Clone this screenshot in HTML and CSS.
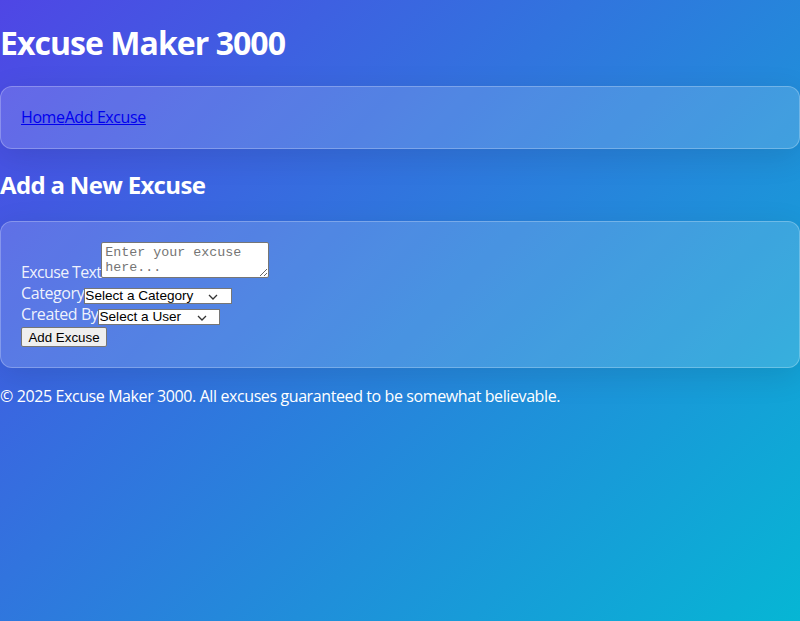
FILE: index.html
```html
<!DOCTYPE html>
<html lang="en">
<head>
<meta charset="utf-8">
<title>Excuse Maker 3000</title>
<link rel="stylesheet" href="styles.css">
</head>
<body>
<header>
  <h1 class="title">Excuse Maker 3000</h1>
  <nav class="card nav">
    <a href="#">Home</a><a href="#">Add Excuse</a>
  </nav>
</header>
<main>
  <h2 class="subtitle">Add a New Excuse</h2>
  <form class="card form">
    <div class="row">
      <label for="text" class="lbl-text">Excuse Text</label><textarea id="text" placeholder="Enter your excuse here..."></textarea>
    </div>
    <div class="row">
      <label for="cat">Category</label><select id="cat" class="sel sel-cat"><option>Select a Category</option></select>
    </div>
    <div class="row">
      <label for="user">Created By</label><select id="user" class="sel sel-user"><option>Select a User</option></select>
    </div>
    <button type="button" class="btn">Add Excuse</button>
  </form>
</main>
<footer class="footer">
  <p>&copy; 2025 Excuse Maker 3000. All excuses guaranteed to be somewhat believable.</p>
</footer>
</body>
</html>
```
FILE: styles.css
```css
html {
  min-height: 100%;
  background: linear-gradient(135deg, #4f46e5 0%, #06b6d4 100%);
}
body {
  margin: 0;
  min-height: 621px;
  font-family: "Open Sans", "Noto Sans", sans-serif;
  font-size: 16px;
  line-height: 1.33;
  letter-spacing: -0.025em;
  color: #fff;
}
.title {
  font-size: 32px;
  letter-spacing: -0.03em;
  margin: 22px 0 21px;
}
.subtitle {
  font-size: 24px;
  letter-spacing: -0.028em;
  margin: 20px 0;
}
.card {
  background: rgba(255, 255, 255, 0.15);
  border: 1px solid rgba(255, 255, 255, 0.25);
  border-radius: 12px;
  padding: 20px;
  box-shadow: 0 8px 32px rgba(0, 0, 0, 0.1);
  margin-bottom: 18px;
}
.nav {
  margin-bottom: 20px;
}
.nav a {
  color: #0000ee;
}
.row label {
  color: rgba(255, 255, 255, 0.92);
}
.row .lbl-text {
  letter-spacing: -0.04em;
}
textarea {
  font-family: "Liberation Mono", "DejaVu Sans Mono", monospace;
  font-size: 13.33px;
  letter-spacing: 0;
  width: 168px;
  height: 36px;
  box-sizing: border-box;
  margin: 0;
  padding: 2px 3px;
  border: 1px solid #767676;
  border-radius: 2px;
  resize: both;
}
.sel {
  -webkit-appearance: none;
  appearance: none;
  font-family: "Liberation Sans", Arial, sans-serif;
  font-size: 13.6px;
  letter-spacing: 0;
  line-height: 14px;
  color: #000;
  border: 1px solid #767676;
  border-radius: 0;
  height: 16px;
  box-sizing: border-box;
  padding: 0;
  margin: 0;
  background: #fff url("data:image/svg+xml,%3Csvg xmlns='http://www.w3.org/2000/svg' width='10' height='6' viewBox='0 0 10 6'%3E%3Cpath d='M1 1l4 4 4-4' fill='none' stroke='%23333' stroke-width='1.3'/%3E%3C/svg%3E") no-repeat;
  vertical-align: -1px;
}
.sel-cat {
  width: 148px;
  background-position: 123px 5px;
}
.sel-user {
  width: 122px;
  background-position: 98px 5px;
}
.btn {
  font-family: "Liberation Sans", Arial, sans-serif;
  font-size: 13.33px;
  letter-spacing: 0;
  margin-top: 1px;
  padding: 1px 6px;
  height: 20px;
  width: 86px;
  background: #efefef;
  border: 1px solid #767676;
  border-radius: 2px;
  color: #000;
}
.footer p {
  margin: 0;
}
```
